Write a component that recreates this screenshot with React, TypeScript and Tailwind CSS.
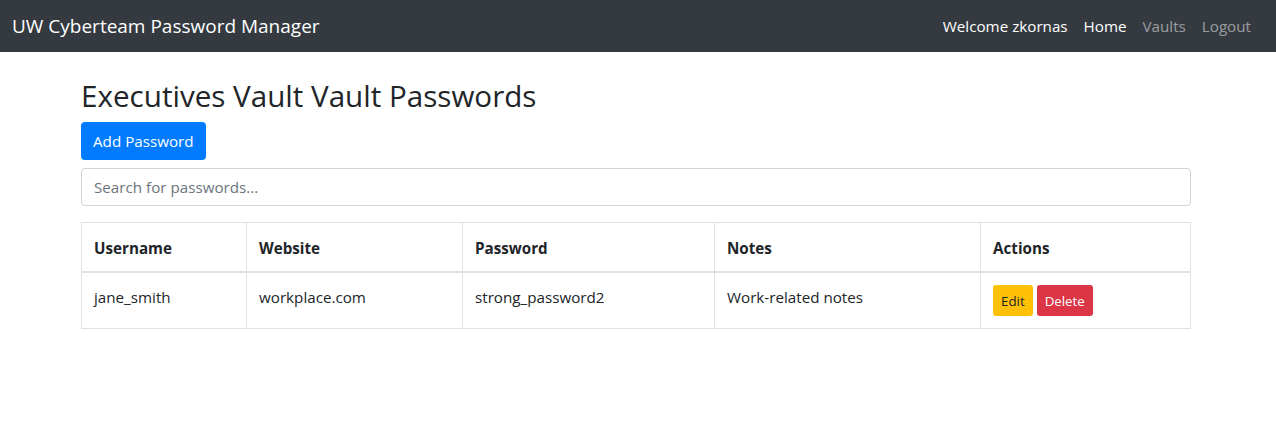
const rows = [
  {
    username: "jane_smith",
    website: "workplace.com",
    password: "strong_password2",
    notes: "Work-related notes",
  },
];

const App = () => {
  return (
    <div className="min-h-screen bg-white text-[#212529] font-['Open_Sans',sans-serif]">
      {/* Navbar */}
      <nav className="flex h-[52px] items-center justify-between bg-[#343a40] pl-[12px] pr-[17px]">
        <span className="text-[19px] leading-[30px] text-white">UW Cyberteam Password Manager</span>
        <ul className="flex items-center text-[15.2px] leading-[24px]">
          <li className="px-2 text-white">Welcome zkornas</li>
          <li className="px-2 text-white">Home</li>
          <li className="px-2 text-white/50">Vaults</li>
          <li className="px-2 text-white/50">Logout</li>
        </ul>
      </nav>

      <div className="flex justify-center pr-[4px]">
        <div className="w-[1110px]">
          <h2 className="mt-6 mb-2 pt-[1px] text-[29.6px] font-medium leading-[37px]">Executives Vault Vault Passwords</h2>
          <button className="h-[38px] rounded bg-[#007bff] px-3 text-[15.2px] leading-[24px] text-white">
            Add Password
          </button>
          <input
            className="mt-2 mb-4 block h-[38px] w-full rounded border border-[#ced4da] px-3 text-[15.2px] text-[#495057] placeholder:text-[#6c757d] outline-none"
            placeholder="Search for passwords..."
          />

          <table className="w-full border-collapse text-[15.2px] leading-[24px]">
            <colgroup>
              <col className="w-[165px]" />
              <col className="w-[216px]" />
              <col className="w-[252px]" />
              <col className="w-[266px]" />
              <col className="w-[210px]" />
            </colgroup>
            <thead>
              <tr>
                {["Username", "Website", "Password", "Notes", "Actions"].map((h) => (
                  <th
                    key={h}
                    className="border border-b-2 border-[#dee2e6] px-3 pt-[13px] pb-[11px] text-left align-top font-bold"
                  >
                    {h}
                  </th>
                ))}
              </tr>
            </thead>
            <tbody>
              {rows.map((r) => (
                <tr key={r.username}>
                  <td className="border border-[#dee2e6] px-3 py-3 align-top">{r.username}</td>
                  <td className="border border-[#dee2e6] px-3 py-3 align-top">{r.website}</td>
                  <td className="border border-[#dee2e6] px-3 py-3 align-top">{r.password}</td>
                  <td className="border border-[#dee2e6] px-3 py-3 align-top">{r.notes}</td>
                  <td className="border border-[#dee2e6] px-3 py-3 align-top">
                    <div className="flex gap-1">
                      <button className="h-[31px] rounded-[3px] bg-[#ffc107] px-2 text-[13.3px] text-[#212529]">
                        Edit
                      </button>
                      <button className="h-[31px] rounded-[3px] bg-[#dc3545] px-2 text-[13.3px] text-white">
                        Delete
                      </button>
                    </div>
                  </td>
                </tr>
              ))}
            </tbody>
          </table>
        </div>
      </div>
    </div>
  );
};

export default App;
